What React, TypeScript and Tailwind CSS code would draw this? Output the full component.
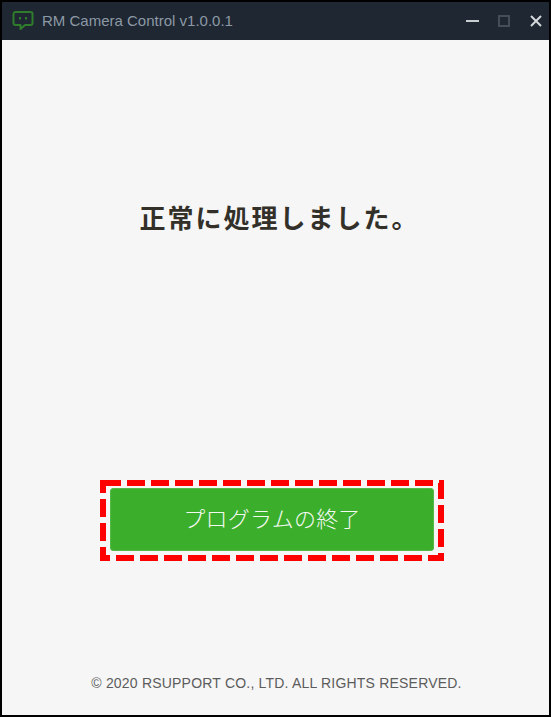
export default function App() {
  return (
    <div className="w-[551px] h-[717px] flex flex-col bg-[#f6f6f6] border-2 border-black font-['Liberation_Sans','Noto_Sans_CJK_JP',sans-serif] overflow-hidden">
      {/* Title bar */}
      <div className="h-[38px] shrink-0 flex items-center bg-[#1e2732] pl-[10px] pr-[6px]">
        <svg width="22" height="22" viewBox="0 0 22 22" fill="none" className="shrink-0">
          <path
            d="M3.500 2h15a2 2 0 0 1 2 2v9a2 2 0 0 1-2 2H13l-4.500 4v-4H3.500a2 2 0 0 1-2-2V4a2 2 0 0 1 2-2Z"
            stroke="#2f7d2c"
            strokeWidth="2"
            strokeLinejoin="round"
          />
          <rect x="7" y="7" width="2" height="2.500" fill="#2f7d2c" />
          <rect x="13" y="7" width="2" height="2.500" fill="#2f7d2c" />
        </svg>
        <span className="ml-[8px] text-[15px] text-[#8d99a5]">RM Camera Control v1.0.0.1</span>
        <div className="ml-auto flex items-center">
          <div className="w-[13px] h-[2px] bg-[#c9ced3]" />
          <div className="ml-[19px] w-[12px] h-[12px] border-2 border-[#444e59]" />
          <svg width="14" height="14" viewBox="0 0 14 14" className="ml-[19px]">
            <path d="M2 2l10 10M12 2L2 12" stroke="#d5d9dd" strokeWidth="2" />
          </svg>
        </div>
      </div>

      {/* Body */}
      <div className="flex-1 flex flex-col">
        <h1 className="mt-[160px] pl-[8px] text-center text-[26px] leading-[38px] font-bold tracking-[2px] text-[#33302a]">
          正常に処理しました。
        </h1>

        <div className="relative mt-[242px] ml-[98px] p-[8px] w-[344px] h-[81px]">
          <button className="block w-[324px] h-[63px] ml-[2px] rounded-[3px] bg-[#3bae2b] border border-[#57b84a] text-[22px] font-light tracking-[0.3px] text-[#f4f9f2]">
            プログラムの終了
          </button>
          <svg width="344" height="81" className="absolute left-0 top-0" fill="none">
            <rect x="3" y="3" width="338" height="75" stroke="#ff0000" strokeWidth="6" strokeDasharray="18 6" />
          </svg>
        </div>

        <p className="mt-[112px] pl-[2px] text-center text-[14px] leading-[20px] tracking-[0.2px] text-[#5c5c5c]">
          © 2020 RSUPPORT CO., LTD. ALL RIGHTS RESERVED.
        </p>
      </div>
    </div>
  );
}
